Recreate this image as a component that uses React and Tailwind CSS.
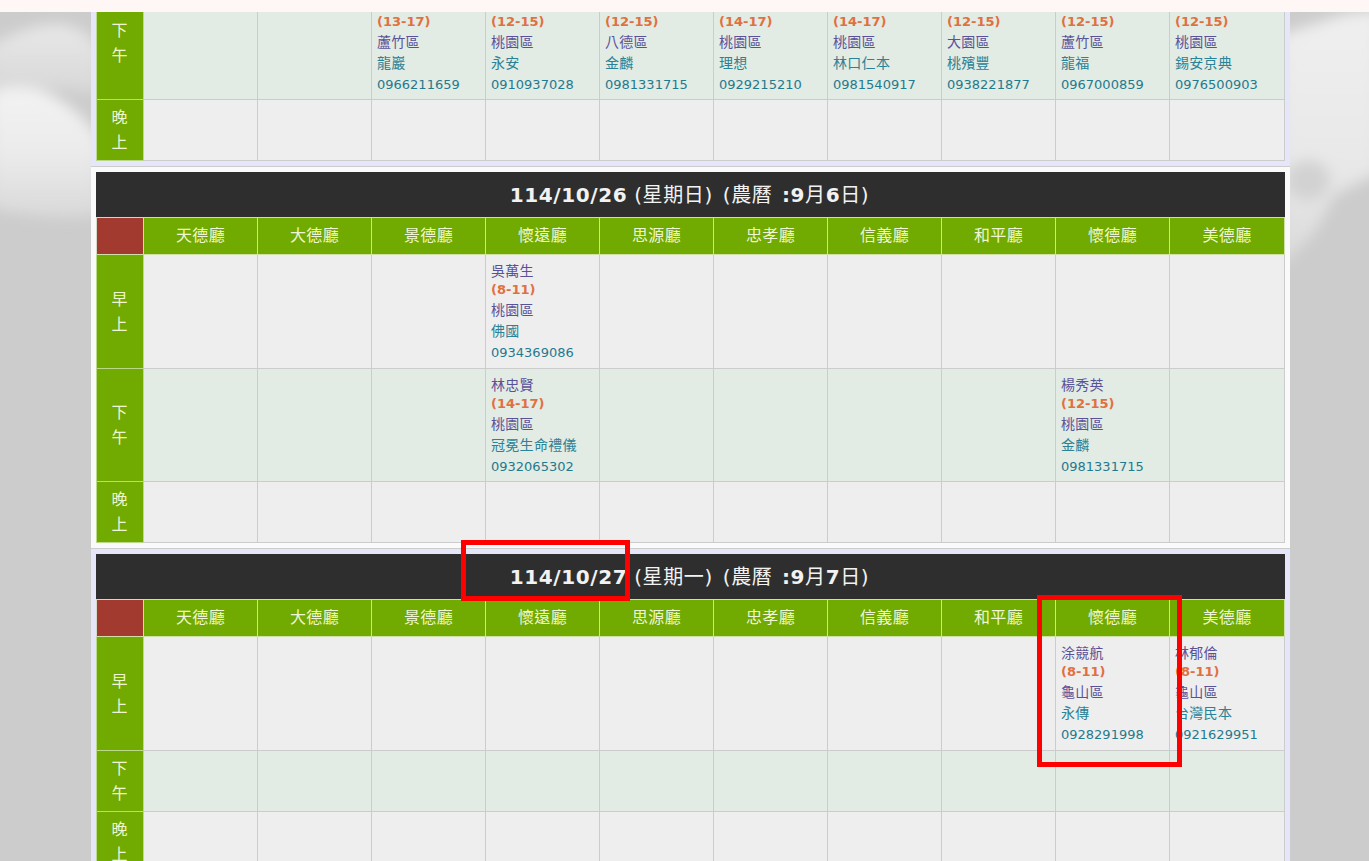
import React from 'react';

const halls = ['天德廳', '大德廳', '景德廳', '懷遠廳', '思源廳', '忠孝廳', '信義廳', '和平廳', '懷德廳', '美德廳'];

const sections = [
  {
    bg: 'bg-[#e6e6fa]',
    rows: [
      {
        label: ['下', '午'], h: 'h-[113px]', alt: true,
        cells: {
          2: ['', '(13-17)', '蘆竹區', '龍巖', '0966211659'],
          3: ['', '(12-15)', '桃園區', '永安', '0910937028'],
          4: ['', '(12-15)', '八德區', '金麟', '0981331715'],
          5: ['', '(14-17)', '桃園區', '理想', '0929215210'],
          6: ['', '(14-17)', '桃園區', '林口仁本', '0981540917'],
          7: ['', '(12-15)', '大園區', '桃殯豐', '0938221877'],
          8: ['', '(12-15)', '蘆竹區', '龍福', '0967000859'],
          9: ['', '(12-15)', '桃園區', '錫安京典', '0976500903'],
        },
      },
      { label: ['晚', '上'], h: 'h-[61px]', cells: {} },
    ],
  },
  {
    bg: 'bg-[#fafafa]',
    date: '114/10/26', week: '星期日', day: '9', dayNum: '6',
    rows: [
      {
        label: ['早', '上'], h: 'h-[114px]',
        cells: { 3: ['吳萬生', '(8-11)', '桃園區', '佛國', '0934369086'] },
      },
      {
        label: ['下', '午'], h: 'h-[113px]', alt: true,
        cells: {
          3: ['林忠賢', '(14-17)', '桃園區', '冠冕生命禮儀', '0932065302'],
          8: ['楊秀英', '(12-15)', '桃園區', '金麟', '0981331715'],
        },
      },
      { label: ['晚', '上'], h: 'h-[61px]', cells: {} },
    ],
  },
  {
    bg: 'bg-[#e6e6fa]',
    date: '114/10/27', week: '星期一', day: '9', dayNum: '7',
    rows: [
      {
        label: ['早', '上'], h: 'h-[114px]',
        cells: {
          8: ['涂競航', '(8-11)', '龜山區', '永傳', '0928291998'],
          9: ['林郁倫', '(8-11)', '龜山區', '台灣民本', '0921629951'],
        },
      },
      { label: ['下', '午'], h: 'h-[61px]', alt: true, cells: {} },
      { label: ['晚', '上'], h: 'h-[61px]', cells: {} },
    ],
  },
];

const cjk = "font-['DejaVu_Sans','Noto_Sans_CJK_TC',sans-serif]";
const gridCols = 'grid grid-cols-[48px_repeat(9,114px)_115px]';

const Booking = ({ info }) => (
  <div className={`pt-[7px] pl-[5px] ${cjk} whitespace-nowrap`}>
    <div className="h-[18px] leading-[18px] text-[14px] tracking-[0.3px] text-[#5a5298]">{info[0]}</div>
    <div className="h-[20px] leading-[19px] text-[13px] font-bold text-[#e0703f]">{info[1]}</div>
    <div className="h-[21px] leading-[21px] text-[14px] tracking-[0.3px] text-[#5a5298]">{info[2]}</div>
    <div className="h-[21px] leading-[21px] text-[14px] tracking-[0.3px] text-[#2a8296]">{info[3]}</div>
    <div className="h-[21px] leading-[22px] text-[13px] text-[#1f7a8e]">{info[4]}</div>
  </div>
);

const Title = ({ s }) => (
  <div className={`h-[45px] bg-[#2e2e2e] flex items-center justify-center pr-[2px] text-[#f2f2f2] text-[20px] tracking-[0.6px] ${cjk} whitespace-pre`}>
    <span className="font-bold">{s.date}</span>
    <span> (</span>
    <span>{s.week}</span>
    <span>) </span>
    <span className="ml-[3px]">(</span>
    <span>農曆</span>
    <span className="font-bold ml-[2px]"> :{s.day}</span>
    <span>月</span>
    <span className="font-bold">{s.dayNum}</span>
    <span>日</span>
    <span>)</span>
  </div>
);

const HeaderRow = () => (
  <div className={`${gridCols} h-[38px] border-y border-[#cfe0a6]`}>
    <div className="bg-[#a33a30] border-x border-[#d8d8c8]" />
    {halls.map((hall) => (
      <div
        key={hall}
        className={`bg-[#71aa00] border-r border-[#cfe0a6] flex items-center justify-center text-[16px] tracking-[0.3px] text-[#eef7d2] ${cjk}`}
      >
        {hall}
      </div>
    ))}
  </div>
);

const Row = ({ row }) => (
  <div className={`${gridCols} ${row.h}`}>
    <div className={`bg-[#71aa00] border-x border-b border-[#bcd98a] flex flex-col items-center justify-center pr-[1px] text-[16px] leading-[25px] text-[#eef7d2] ${cjk}`}>
      <span>{row.label[0]}</span>
      <span>{row.label[1]}</span>
    </div>
    {halls.map((hall, i) => (
      <div
        key={hall}
        className={`border-r border-b border-[#cccccc] overflow-hidden ${row.alt ? 'bg-[#e2ebe4]' : 'bg-[#eeeeee]'}`}
      >
        {row.cells[i] && <Booking info={row.cells[i]} />}
      </div>
    ))}
  </div>
);

const Section = ({ s }) => (
  <div className={`${s.bg} px-[5px] py-[5px] border-b border-[#cccccc]`}>
    {s.date && <Title s={s} />}
    {s.date && <HeaderRow />}
    {s.rows.map((row, i) => (
      <Row key={i} row={row} />
    ))}
  </div>
);

// grey cloud photo behind the page, left and right of the content column
const Clouds = () => (
  <svg className="absolute inset-0" width="1369" height="861" viewBox="0 0 1369 861">
    <defs>
      <filter id="soft" x="-30%" y="-30%" width="160%" height="160%">
        <feGaussianBlur stdDeviation="7" />
      </filter>
      <linearGradient id="leftCloud" x1="0" y1="0" x2="0" y2="1">
        <stop offset="0" stopColor="#f3f3f3" />
        <stop offset="0.5" stopColor="#ebebeb" />
        <stop offset="1" stopColor="#d9d9d9" />
      </linearGradient>
      <linearGradient id="topCloud" x1="0" y1="0" x2="0" y2="1">
        <stop offset="0" stopColor="#e8e8e8" />
        <stop offset="1" stopColor="#d6d6d6" />
      </linearGradient>
      <linearGradient id="rightCloud" x1="0" y1="0" x2="0" y2="1">
        <stop offset="0" stopColor="#efefef" />
        <stop offset="0.6" stopColor="#e8e8e8" />
        <stop offset="1" stopColor="#dadada" />
      </linearGradient>
    </defs>
    <g filter="url(#soft)">
      <path d="M-10 45 Q40 18 70 26 Q90 32 100 50 L100 95 Q40 80 -10 100 Z" fill="url(#topCloud)" />
      <path d="M-10 92 Q30 80 60 100 Q85 115 100 140 L100 215 Q50 222 -10 208 Z" fill="url(#leftCloud)" />
      <path d="M1280 35 L1345 14 L1380 10 L1380 172 L1335 195 L1315 232 L1280 268 Z" fill="url(#rightCloud)" />
      <ellipse cx="1308" cy="180" rx="22" ry="20" fill="#d2d2d2" />
    </g>
  </svg>
);

export default function App() {
  return (
    <div className="relative w-[1369px] h-[861px] overflow-hidden bg-[#cccccc]">
      <Clouds />
      <div className="relative z-10 h-[12px] bg-[#fff7f5]" />
      <div className="relative w-[1199px] ml-[91px] -mt-[30px]">
        {sections.map((s, i) => (
          <Section key={i} s={s} />
        ))}
      </div>
      <div className="absolute left-[461px] top-[540px] w-[169px] h-[61px] border-[5px] border-[#ff0000] z-20" />
      <div className="absolute left-[1037px] top-[595px] w-[145px] h-[172px] border-[5px] border-[#ff0000] z-20" />
    </div>
  );
}
